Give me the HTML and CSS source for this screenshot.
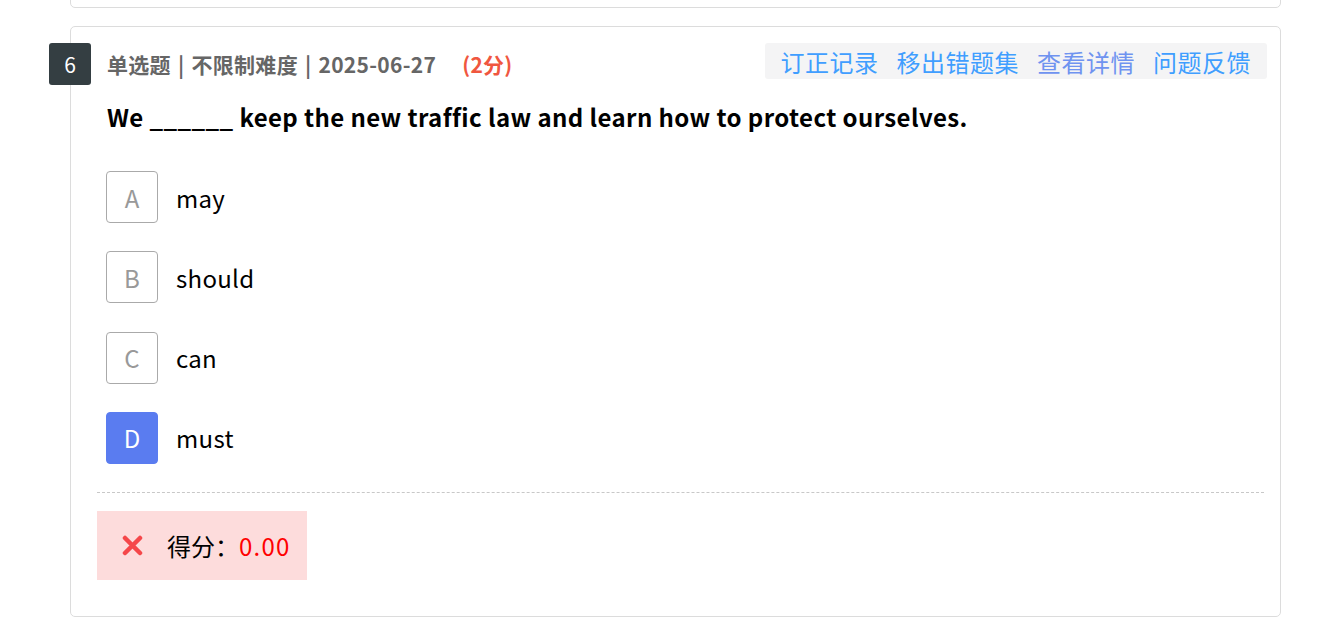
FILE: index.html
```html
<!DOCTYPE html>
<html lang="zh-CN">
<head>
<meta charset="utf-8">
<title>错题集</title>
<link rel="stylesheet" href="styles.css">
</head>
<body>
<div class="list">
  <div class="card card-prev"></div>
  <div class="card">
    <div class="num">6</div>
    <div class="head">
      <div class="meta">单选题<span class="sep">|</span>不限制难度<span class="sep">|</span>2025-06-27<span class="score-tag">(2分)</span></div>
      <div class="links">
        <span class="link">订正记录</span>
        <span class="link">移出错题集</span>
        <span class="link link-hover">查看详情</span>
        <span class="link">问题反馈</span>
      </div>
    </div>
    <div class="question">We ______ keep the new traffic law and learn how to protect ourselves.</div>
    <div class="options">
      <div class="option"><span class="opt-key">A</span><span class="opt-text">may</span></div>
      <div class="option"><span class="opt-key">B</span><span class="opt-text">should</span></div>
      <div class="option"><span class="opt-key">C</span><span class="opt-text">can</span></div>
      <div class="option"><span class="opt-key opt-chosen">D</span><span class="opt-text">must</span></div>
    </div>
    <div class="divider"></div>
    <div class="result">
      <svg class="x-icon" width="21" height="21" viewBox="0 0 21 21"><path d="M3 3 L18 18 M18 3 L3 18" stroke="#f5474a" stroke-width="4.5" stroke-linecap="round"/></svg>
      <span class="result-label">得分：</span><span class="result-val">0.00</span>
    </div>
  </div>
</div>
</body>
</html>
```
FILE: styles.css
```css
* { box-sizing: border-box; }
body {
  margin: 0;
  background: #fff;
  font-family: "Noto Sans CJK SC", "Noto Sans", sans-serif;
  color: #000;
}
.list {
  padding-left: 70px;
  width: 1281px;
  display: flex;
  flex-direction: column;
  gap: 18px;
}
.card {
  position: relative;
  width: 1211px;
  border: 1px solid #dcdcdc;
  border-radius: 5px;
  background: #fff;
  padding: 16px 16px 36px 26px;
}
.card-prev {
  height: 28px;
  margin-top: -20px;
  padding: 0;
}
.num {
  position: absolute;
  left: -22px;
  top: 16px;
  width: 42px;
  height: 42px;
  border-radius: 3px;
  background: #343e42;
  color: #fff;
  font-size: 21px;
  display: flex;
  align-items: center;
  justify-content: center;
}
.head {
  display: flex;
  justify-content: space-between;
  align-items: center;
  height: 36px;
  padding-left: 10px;
}
.meta {
  font-size: 21px;
  font-weight: bold;
  color: #666;
  padding-top: 6px;
  letter-spacing: 0.3px;
}
.sep {
  margin: 0 7px;
}
.score-tag {
  color: #f0573f;
  margin-left: 26px;
}
.links {
  background: #f4f4f5;
  border-radius: 3px;
  height: 36px;
  display: flex;
  align-items: center;
  gap: 18px;
  padding: 0 16px 0 16px;
  margin-right: -3px;
}
.link {
  font-size: 24px;
  letter-spacing: 0.5px;
  color: #409eff;
}
.link-hover { color: #6f93f0; }
.question {
  margin: 20px 0 0 10px;
  font-size: 24px;
  font-weight: bold;
  line-height: 36px;
  letter-spacing: 0.4px;
}
.options {
  margin: 36px 0 0 9px;
  display: flex;
  flex-direction: column;
  gap: 28.3px;
}
.option {
  display: flex;
  align-items: center;
  height: 52px;
}
.opt-key {
  width: 52px;
  height: 52px;
  border: 1px solid #aaa;
  border-radius: 4px;
  display: flex;
  align-items: center;
  justify-content: center;
  font-size: 24px;
  color: #999;
}
.opt-chosen {
  background: #5a7cf0;
  border-color: #5a7cf0;
  color: #fff;
}
.opt-text {
  margin-left: 18px;
  font-size: 24px;
  letter-spacing: 0.3px;
}
.divider {
  margin-top: 28px;
  border-top: 1px dashed #c8c8c8;
}
.result {
  margin-top: 18px;
  width: 210px;
  height: 69px;
  background: #fddcdc;
  display: flex;
  align-items: center;
  padding-left: 25px;
  font-size: 24px;
}
.x-icon { margin-right: 24px; }
.result-val { color: #f00; letter-spacing: 1.2px; }
```
